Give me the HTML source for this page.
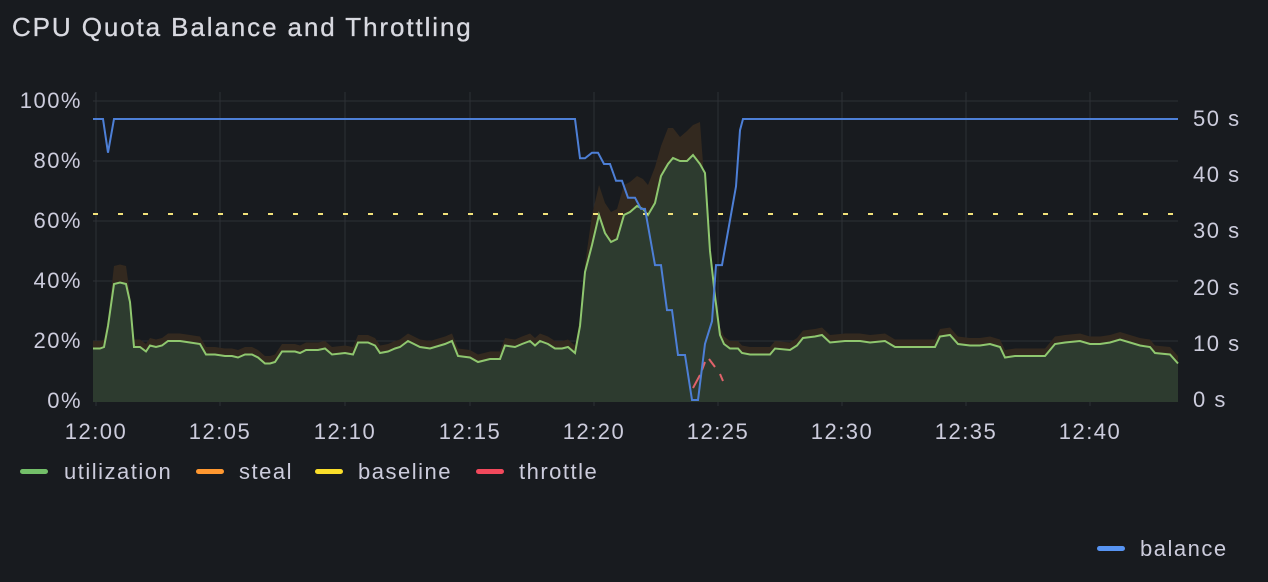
<!DOCTYPE html>
<html><head><meta charset="utf-8"><style>
html,body{margin:0;padding:0;background:#181b1f;width:1268px;height:582px;overflow:hidden;font-family:"Liberation Sans",sans-serif;color:#ccccdc}
.t{position:absolute;left:12px;top:12px;font-size:26px;letter-spacing:1.9px;color:#d8d9e0;-webkit-text-stroke:0.3px #d8d9e0}
svg{position:absolute;left:0;top:0}
svg text{font-family:"Liberation Sans",sans-serif;fill:#ccccdc;font-size:22px;letter-spacing:1.5px}
</style></head><body>
<div class="t">CPU Quota Balance and Throttling</div>
<svg width="1268" height="582" id="s">
<g stroke="#2d3035" stroke-width="1">
<line x1="93" y1="101" x2="1178" y2="101"/><line x1="93" y1="161" x2="1178" y2="161"/><line x1="93" y1="221" x2="1178" y2="221"/><line x1="93" y1="281" x2="1178" y2="281"/><line x1="93" y1="341" x2="1178" y2="341"/>
<line x1="96" y1="92" x2="96" y2="406"/><line x1="220" y1="92" x2="220" y2="406"/><line x1="345" y1="92" x2="345" y2="406"/><line x1="470" y1="92" x2="470" y2="406"/><line x1="594" y1="92" x2="594" y2="406"/><line x1="718" y1="92" x2="718" y2="406"/><line x1="842" y1="92" x2="842" y2="406"/><line x1="966" y1="92" x2="966" y2="406"/><line x1="1090" y1="92" x2="1090" y2="406"/>
</g>
<path id="brown" fill="#33291f"/>
<path id="garea" fill="#2d3b2f"/>
<path id="gline" fill="none" stroke="#8fc76f" stroke-width="2"/>
<line x1="93" y1="214" x2="1178" y2="214" stroke="#f2e27a" stroke-width="2" stroke-dasharray="5 20"/>
<path d="M693,388 L700,375 M702,370 L705,362 M709,359 L715,367 M720,374 L723,381" stroke="#e0626a" stroke-width="2" fill="none"/>
<path id="bal" fill="none" stroke="#4d7fd6" stroke-width="2"/>
<g text-anchor="end">
<text x="82" y="108">100%</text><text x="82" y="168">80%</text><text x="82" y="228">60%</text><text x="82" y="288">40%</text><text x="82" y="348">20%</text><text x="82" y="408">0%</text>
</g>
<g>
<text x="1193" y="126">50 s</text><text x="1193" y="182">40 s</text><text x="1193" y="238">30 s</text><text x="1193" y="295">20 s</text><text x="1193" y="351">10 s</text><text x="1193" y="407">0 s</text>
</g>
<g text-anchor="middle">
<text x="96" y="439">12:00</text><text x="220" y="439">12:05</text><text x="345" y="439">12:10</text><text x="470" y="439">12:15</text><text x="594" y="439">12:20</text><text x="718" y="439">12:25</text><text x="842" y="439">12:30</text><text x="966" y="439">12:35</text><text x="1090" y="439">12:40</text>
</g>
<rect x="20" y="469" width="28" height="5" rx="2.5" fill="#73bf69"/><text x="64" y="479">utilization</text>
<rect x="196" y="469" width="28" height="5" rx="2.5" fill="#ff9830"/><text x="239" y="479">steal</text>
<rect x="315" y="469" width="28" height="5" rx="2.5" fill="#fade2a"/><text x="358" y="479">baseline</text>
<rect x="476" y="469" width="28" height="5" rx="2.5" fill="#f2495c"/><text x="519" y="479">throttle</text>
<rect x="1097" y="546" width="28" height="5" rx="2.5" fill="#5794f2"/><text x="1140" y="556">balance</text>
</svg>
<script>
(function(){
var u=[[93,17.5],[100,17.5],[104,18],[108,25],[114,39],[120,39.5],[126,39],[130,33],[134,18],[140,18],[146,16.5],[150,18.5],[156,18],[162,18.5],[168,20],[180,20],[190,19.5],[200,19],[206,15.5],[215,15.5],[225,15],[232,15],[238,14.5],[245,15.5],[252,15.5],[258,14.5],[265,12.5],[270,12.5],[275,13],[282,16.5],[295,16.5],[300,16],[306,17],[318,17],[325,17.5],[332,15.5],[345,16],[353,15.5],[358,19.5],[368,19.5],[375,18.5],[380,16],[388,16.5],[395,17.5],[400,18],[408,20],[420,18],[430,17.5],[445,19],[452,20],[458,15],[470,14.5],[478,13],[490,14],[500,14],[505,18.5],[515,18],[522,19],[530,20],[535,18.5],[540,20],[548,19],[555,17.5],[562,17.5],[568,18],[575,16],[580,25],[585,43],[592,52],[599,62],[605,56],[611,53],[617,54],[624,62],[630,63],[637,65],[643,64],[648,62],[655,66],[661,75],[668,79],[673,81],[680,80],[687,80],[693,82],[700,79],[705,76],[710,50],[715,35],[720,22],[724,19],[730,17.5],[738,17.5],[742,16],[750,15.5],[770,15.5],[775,17.5],[790,17],[797,18.5],[803,21],[815,21.5],[822,22],[830,19.5],[845,20],[860,20],[870,19.5],[885,20],[895,18],[935,18],[940,21.5],[950,22],[958,19],[970,18.5],[980,18.5],[990,19],[1000,18],[1005,14.5],[1015,15],[1045,15],[1055,19],[1065,19.5],[1080,20],[1090,19],[1100,19],[1110,19.5],[1120,20.5],[1130,19.5],[1140,18.5],[1150,18],[1155,16],[1170,15.5],[1178,12.5]];
var add={114:45,120:45.5,126:45,598:72,605:66,612:64,622:70,633:73,645:75,655:78,661:85,668:91,680:88,690:87,700:93,705:70,710:52};
var py=function(p){return 401-3*p};
var l="",tp="";
u.forEach(function(q,i){l+=(i?"L":"M")+q[0]+","+py(q[1]).toFixed(1);var b=q[1]+2.5;if(q[0]>=590&&q[0]<=712){b=Math.max(b,q[1]+10);}if(add[q[0]])b=add[q[0]];tp+=(i?"L":"M")+q[0]+","+py(b).toFixed(1);});
document.getElementById("gline").setAttribute("d",l);
document.getElementById("garea").setAttribute("d",l+"L1178,402L93,402Z");
document.getElementById("brown").setAttribute("d",tp+"L1178,402L93,402Z");
var b=[[93,50],[103,50],[108,44],[114,50],[575,50],[580,43],[585,43],[592,44],[598,44],[604,42],[610,42],[616,39],[622,39],[628,36],[635,36],[641,34],[645,34],[650,29],[655,24],[661,24],[667,16],[672,16],[678,8],[685,8],[692,0],[698,0],[705,10],[712,14],[716,24],[722,24],[728,30],[736,38],[740,48],[743,50],[1178,50]];
var d="";b.forEach(function(q,i){d+=(i?"L":"M")+q[0]+","+(400-5.62*q[1]).toFixed(1)});
document.getElementById("bal").setAttribute("d",d);
})();
</script>
</body></html>
